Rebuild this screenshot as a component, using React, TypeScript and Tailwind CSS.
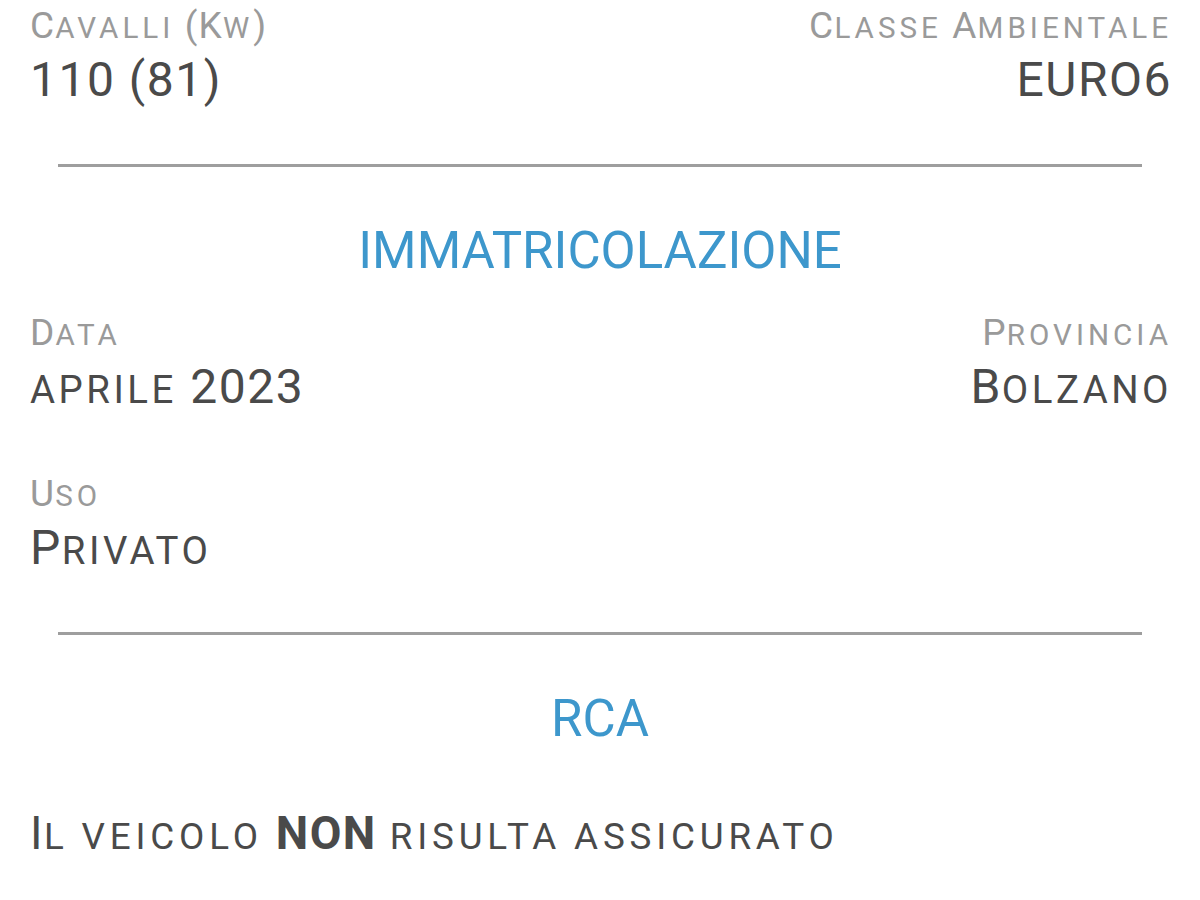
import React from "react";

const font = { fontFamily: "Roboto, 'Noto Sans', sans-serif" };

function SC({ text, sc }: { text: string; sc: string }) {
  const parts = text.split(/([a-zà-ÿ]+)/);
  return (
    <>
      {parts.map((p, i) =>
        /^[a-zà-ÿ]+$/.test(p) ? (
          <span key={i} className={"text-[0.8em] leading-[0] " + sc}>
            {p.toUpperCase()}
          </span>
        ) : (
          <React.Fragment key={i}>{p}</React.Fragment>
        )
      )}
    </>
  );
}

function Field({ label, value, right }: { label: string; value: string; right?: boolean }) {
  return (
    <div className={right ? "flex flex-col items-end text-right mr-[-2px]" : "flex flex-col items-start"}>
      <div className="text-[37px] leading-[40px] tracking-[1.2px] text-[#9a9a9a]">
        <SC text={label} sc="tracking-[4px]" />
      </div>
      <div className="mt-[8px] text-[48px] leading-[52px] tracking-[1.5px] text-[#4a4a4a]">
        <SC text={value} sc="tracking-[3.5px]" />
      </div>
    </div>
  );
}

export default function App() {
  return (
    <div className="w-[1200px] h-[900px] bg-white overflow-hidden" style={font}>
      <div className="px-[30px] pt-[6px]">
        <div className="flex justify-between">
          <Field label="Cavalli (Kw)" value="110 (81)" />
          <Field label="Classe Ambientale" value="EURO6" right />
        </div>
      </div>
      <div className="mx-[58px] mt-[58px] h-[3px] bg-[#9e9e9e]" />
      <div className="mt-[54px] text-center text-[51px] leading-[60px] text-[#3d97cc]">IMMATRICOLAZIONE</div>
      <div className="px-[30px] mt-[32px]">
        <div className="flex justify-between">
          <Field label="Data" value="aprile 2023" />
          <Field label="Provincia" value="Bolzano" right />
        </div>
        <div className="mt-[61px]">
          <Field label="Uso" value="Privato" />
        </div>
      </div>
      <div className="mx-[58px] mt-[58px] h-[3px] bg-[#9e9e9e]" />
      <div className="mt-[54px] text-center text-[51px] leading-[60px] text-[#3d97cc]">RCA</div>
      <div className="px-[30px] mt-[58px] text-[46px] leading-[52px] tracking-[1.5px] text-[#4a4a4a]">
        <SC text="Il veicolo " sc="tracking-[4.8px]" />
        <span className="font-bold">NON</span>
        <SC text=" risulta assicurato" sc="tracking-[4.8px]" />
      </div>
    </div>
  );
}
